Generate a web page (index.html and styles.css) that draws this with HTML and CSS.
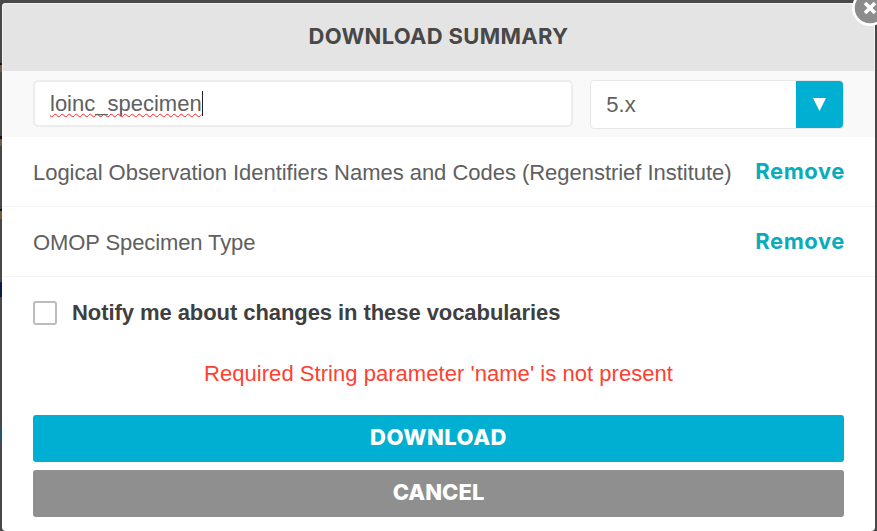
FILE: index.html
```html
<!DOCTYPE html>
<html lang="en">
<head>
<meta charset="utf-8">
<title>Download summary</title>
<link rel="stylesheet" href="styles.css">
</head>
<body>
<main class="modal">
  <header class="header"><h1 class="title">DOWNLOAD SUMMARY</h1></header>
  <button class="close" aria-label="Close">
    <svg width="36" height="36" viewBox="0 0 36 36"><circle cx="18" cy="18" r="16.6" fill="#8c8c8c" stroke="#fff" stroke-width="2.6"/><path d="M13 13l10 10M23 13l-10 10" stroke="#fff" stroke-width="3.6"/></svg>
  </button>
  <section class="form">
    <div class="name"><span class="typed">loinc_specimen</span><span class="caret"></span></div>
    <div class="select"><span class="version">5.x</span>
      <span class="arrow"><svg width="13" height="13" viewBox="0 0 13 13"><path d="M0 0h13L6.5 13z" fill="#fff"/></svg></span>
    </div>
  </section>
  <div class="row"><span class="vocab vocab-long">Logical Observation Identifiers Names and Codes (Regenstrief Institute)</span><a class="remove">Remove</a></div>
  <div class="row"><span class="vocab vocab-short">OMOP Specimen Type</span><a class="remove">Remove</a></div>
  <label class="notify"><span class="box"></span><span class="notify-text">Notify me about changes in these vocabularies</span></label>
  <p class="error"><span>Required String parameter 'name' is not present</span></p>
  <div class="actions">
    <button class="btn download"><span>DOWNLOAD</span></button>
    <button class="btn cancel"><span>CANCEL</span></button>
  </div>
</main>
</body>
</html>
```
FILE: styles.css
```css
* { box-sizing: border-box; }
body {
  margin: 0;
  height: 531px;
  padding: 3px 2px 0;
  overflow: hidden;
  font-family: "Liberation Sans", Arial, sans-serif;
  font-size: 22px;
  color: #606060;
  background: #484848 linear-gradient(#484848 0 63px, #15130f 63px 65px, #705c3e 65px 72px, #484848 72px 136px, #15130f 136px 139px, #705c3e 139px 146px, #484848 146px 209px, #15130f 209px 211px, #705c3e 211px 219px, #484848 219px 282px, #071d4a 282px 297px, #484848 297px 427px, #24566b 427px 442px, #484848 442px) 0 0 / 2px 531px no-repeat;
}
.modal {
  position: relative;
  width: 873px;
  height: 528px;
  background: #fff;
  border-radius: 4px;
}
.header {
  height: 68px;
  padding-bottom: 3px;
  display: flex;
  align-items: center;
  justify-content: center;
  background: #e4e4e4;
  border: 1px solid #f2f2f2;
  border-bottom: 0;
  border-radius: 4px 4px 0 0;
}
.title {
  margin: 0;
  font: 700 22px/26px "Inter", sans-serif;
  letter-spacing: 0.3px;
  color: #484848;
}
.close {
  position: absolute;
  top: -13px;
  left: 850px;
  width: 36px;
  height: 36px;
  padding: 0;
  border: 0;
  background: none;
}
.close svg { display: block; }
.form {
  height: 66px;
  padding: 9px 31px 0;
  display: flex;
  gap: 16px;
  background: #f9f9f9;
}
.name {
  width: 541px;
  height: 47px;
  padding: 0 15px;
  display: flex;
  align-items: center;
  background: #fff;
  border: 2px solid #ededed;
  border-radius: 5px;
}
.typed {
  text-decoration: underline wavy #f22 1.3px;
  text-decoration-skip-ink: none;
  text-underline-offset: 2px;
}
.caret { width: 1px; height: 25px; background: #222; }
.select {
  width: 254px;
  height: 49px;
  margin-left: 1px;
  padding-left: 15px;
  display: flex;
  align-items: center;
  justify-content: space-between;
  background: #fff;
  border: 1px solid #e7e7e7;
  border-radius: 4px;
}
.version { padding-top: 1px; }
.arrow {
  width: 47px;
  height: 47px;
  display: flex;
  align-items: center;
  justify-content: center;
  background: #00afd2;
  border-radius: 0 4px 4px 0;
}
.row {
  height: 70px;
  padding: 1px 30px 0 31px;
  display: flex;
  align-items: center;
  justify-content: space-between;
  border-bottom: 1px solid #f3f3f3;
}
.vocab { padding-top: 1px; white-space: nowrap; }
.vocab-long { letter-spacing: -0.03px; }
.vocab-short { letter-spacing: -0.1px; }
.remove {
  padding-bottom: 3px;
  font: 700 22px/26px "Inter", sans-serif;
  letter-spacing: 0.55px;
  color: #0aabbb;
}
.notify {
  height: 71px;
  padding-left: 31px;
  display: flex;
  align-items: center;
  gap: 15px;
  color: #3f3f3f;
  font-weight: 700;
}
.notify-text { letter-spacing: -0.07px; }
.box {
  width: 24px;
  height: 24px;
  border: 2px solid #bcbcbc;
  border-radius: 3px;
}
.error {
  margin: 0;
  height: 67px;
  padding-top: 13px;
  line-height: 26px;
  letter-spacing: 0.04px;
  text-align: center;
  color: #ff4030;
}
.actions {
  padding: 0 31px;
  display: flex;
  flex-direction: column;
  gap: 8px;
}
.btn {
  width: 811px;
  height: 47px;
  padding: 0 0 3px;
  border: 0;
  border-radius: 3px;
  font: 800 22px/26px "Inter", sans-serif;
  color: #fff;
}
.download { background: #00afd2; letter-spacing: 0.5px; }
.cancel { background: #8f8f8f; }
```
